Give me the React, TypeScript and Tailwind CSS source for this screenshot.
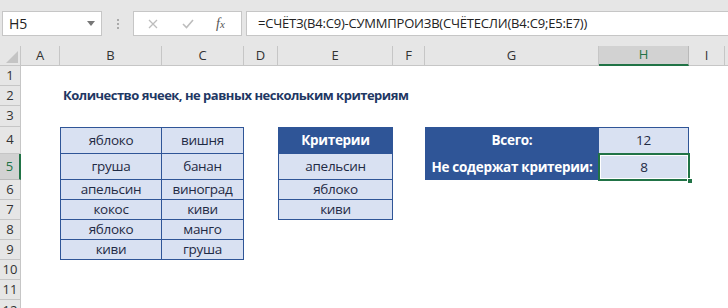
import React from "react";

const font = { fontFamily: '"Open Sans", "Noto Sans", sans-serif' };

const cols = ["A", "B", "C", "D", "E", "F", "G", "H", "I"];
const rows = [1, 2, 3, 4, 5, 6, 7, 8, 9, 10, 11, 12];

const colStart = [
  "col-start-2",
  "col-start-3",
  "col-start-4",
  "col-start-5",
  "col-start-6",
  "col-start-7",
  "col-start-8",
  "col-start-9",
  "col-start-10",
];
const rowStart = [
  "row-start-2",
  "row-start-3",
  "row-start-4",
  "row-start-5",
  "row-start-6",
  "row-start-7",
  "row-start-8",
  "row-start-9",
  "row-start-10",
  "row-start-11",
  "row-start-12",
  "row-start-13",
];

const fruits: [string, string][] = [
  ["яблоко", "вишня"],
  ["груша", "банан"],
  ["апельсин", "виноград"],
  ["кокос", "киви"],
  ["яблоко", "манго"],
  ["киви", "груша"],
];

const criteria = ["апельсин", "яблоко", "киви"];

const cellText =
  "flex items-center justify-center text-[13.5px] tracking-[-0.3px] text-[#1f2a44] bg-[#d9e1f2] border-[#2f5597]";

export default function App() {
  return (
    <div className="w-[728px] h-[308px] overflow-hidden bg-white" style={font}>
      {/* formula bar */}
      <div className="h-[46px] bg-[#e6e6e6] pt-[11px] flex items-start">
        <div className="ml-[2px] w-[100px] h-[25px] bg-white border border-[#c6c6c6] flex items-center justify-between pl-[6px] pr-[6px]">
          <span className="text-[14px] text-[#222]">H5</span>
          <svg width="8" height="5" viewBox="0 0 8 5">
            <path d="M0 0 L8 0 L4 5 Z" fill="#777" />
          </svg>
        </div>
        <div className="w-[31px] h-[25px] flex items-center justify-center">
          <div className="flex flex-col gap-[2px]">
            <div className="w-[2px] h-[2px] bg-[#aaa]" />
            <div className="w-[2px] h-[2px] bg-[#aaa]" />
            <div className="w-[2px] h-[2px] bg-[#aaa]" />
          </div>
        </div>
        <div className="w-[109px] h-[25px] bg-white border border-[#c6c6c6] flex items-center">
          <svg className="ml-[14px]" width="10" height="10" viewBox="0 0 10 10">
            <path d="M1 1 L9 9 M9 1 L1 9" stroke="#bdbdbd" strokeWidth="1.3" />
          </svg>
          <svg className="ml-[24px]" width="12" height="10" viewBox="0 0 12 10">
            <path d="M1 5 L4.5 8.5 L11 1" stroke="#bdbdbd" strokeWidth="1.6" fill="none" />
          </svg>
          <span
            className="ml-[22px] text-[14px] italic text-[#555]"
            style={{ fontFamily: '"Liberation Serif", serif' }}
          >
            f<span className="text-[11px]">x</span>
          </span>
        </div>
        <div className="ml-[4px] flex-1 h-[25px] bg-white border border-[#c6c6c6] border-r-0 flex items-center pl-[11px]">
          <span className="text-[13px] text-[#222] tracking-[-0.2px]">
            =СЧЁТЗ(B4:C9)-СУММПРОИЗВ(СЧЁТЕСЛИ(B4:C9;E5:E7))
          </span>
        </div>
      </div>

      {/* sheet */}
      <div className="grid grid-cols-[21px_39px_102px_82px_34px_115px_32px_174px_90px_36px_1fr] grid-rows-[20px_20px_20px_21px_27px_26px_20px_20px_20px_20px_20px_20px_8px]">
        {/* corner */}
        <div className="col-start-1 row-start-1 bg-[#e6e6e6] border-r border-b border-[#c6c6c6] relative">
          <svg className="absolute right-[2px] bottom-[2px]" width="12" height="12" viewBox="0 0 12 12">
            <path d="M12 0 L12 12 L0 12 Z" fill="#c4c4c4" />
          </svg>
        </div>
        {cols.map((c, i) =>
          c === "H" ? (
            <div
              key={c}
              className={`${colStart[i]} row-start-1 bg-[#d2d2d2] border-r border-[#b9b9b9] border-b-2 border-b-[#217346] flex items-center justify-center text-[13px] text-[#217346]`}
            >
              {c}
            </div>
          ) : (
            <div
              key={c}
              className={`${colStart[i]} row-start-1 bg-[#e6e6e6] border-r border-b border-[#c6c6c6] flex items-center justify-center text-[13px] text-[#333]`}
            >
              {c}
            </div>
          )
        )}
        <div className="col-start-11 row-start-1 bg-[#e6e6e6] border-b border-[#c6c6c6]" />

        {rows.map((r, i) =>
          r === 5 ? (
            <div
              key={r}
              className={`col-start-1 ${rowStart[i]} bg-[#d2d2d2] border-b border-[#b9b9b9] border-r-2 border-r-[#217346] flex items-center justify-center text-[13px] text-[#217346]`}
            >
              {r}
            </div>
          ) : r === 12 ? (
            <div
              key={r}
              className={`col-start-1 ${rowStart[i]} bg-[#e6e6e6] border-r border-[#c6c6c6] overflow-hidden flex justify-center text-[13px] leading-[16px] pt-[2px] text-[#333]`}
            >
              {r}
            </div>
          ) : (
            <div
              key={r}
              className={`col-start-1 ${rowStart[i]} bg-[#e6e6e6] border-r border-b border-[#c6c6c6] flex items-center justify-center text-[13px] text-[#333]`}
            >
              {r}
            </div>
          )
        )}

        {/* title */}
        <div className="col-start-3 col-span-6 row-start-3 flex items-center pl-[3px] text-[13px] tracking-[-0.5px] font-bold text-[#1f3864] whitespace-nowrap">
          Количество ячеек, не равных нескольким критериям
        </div>

        {/* B4:C9 */}
        {fruits.map(([b, c], i) => (
          <React.Fragment key={i}>
            <div className={`col-start-3 ${rowStart[i + 3]} ${cellText} border-l border-r border-b ${i === 0 ? "border-t" : ""}`}>
              {b}
            </div>
            <div className={`col-start-4 ${rowStart[i + 3]} ${cellText} border-r border-b ${i === 0 ? "border-t" : ""}`}>
              {c}
            </div>
          </React.Fragment>
        ))}

        {/* E4:E7 */}
        <div className="col-start-6 row-start-5 flex items-center justify-center bg-[#2f5597] text-white font-bold text-[13.5px] tracking-[-0.3px]">
          Критерии
        </div>
        {criteria.map((c, i) => (
          <div key={c} className={`col-start-6 ${rowStart[i + 4]} ${cellText} border-l border-r border-b`}>
            {c}
          </div>
        ))}

        {/* G4:H5 */}
        <div className="col-start-8 row-start-5 flex items-center justify-center bg-[#2f5597] text-white font-bold text-[13.5px] tracking-[-0.3px] whitespace-nowrap">
          Всего:
        </div>
        <div className="col-start-8 row-start-6 flex items-center justify-center bg-[#2f5597] text-white font-bold text-[13.5px] tracking-[-0.3px] whitespace-nowrap">
          Не содержат критерии:
        </div>
        <div className={`col-start-9 row-start-5 ${cellText} border-t border-r border-b`}>12</div>
        <div className="col-start-9 row-start-6 relative bg-[#d9e1f2]">
          <div className="absolute left-[-1px] top-[-1px] right-[-1px] bottom-[-1px] border-2 border-[#217346] flex items-center justify-center text-[13.5px] text-[#1f2a44]">
            <div className="absolute inset-0 border border-white" />
            8
          </div>
          <div className="absolute right-[-4px] bottom-[-4px] w-[6px] h-[6px] bg-[#217346] border border-white" />
        </div>
      </div>
    </div>
  );
}
